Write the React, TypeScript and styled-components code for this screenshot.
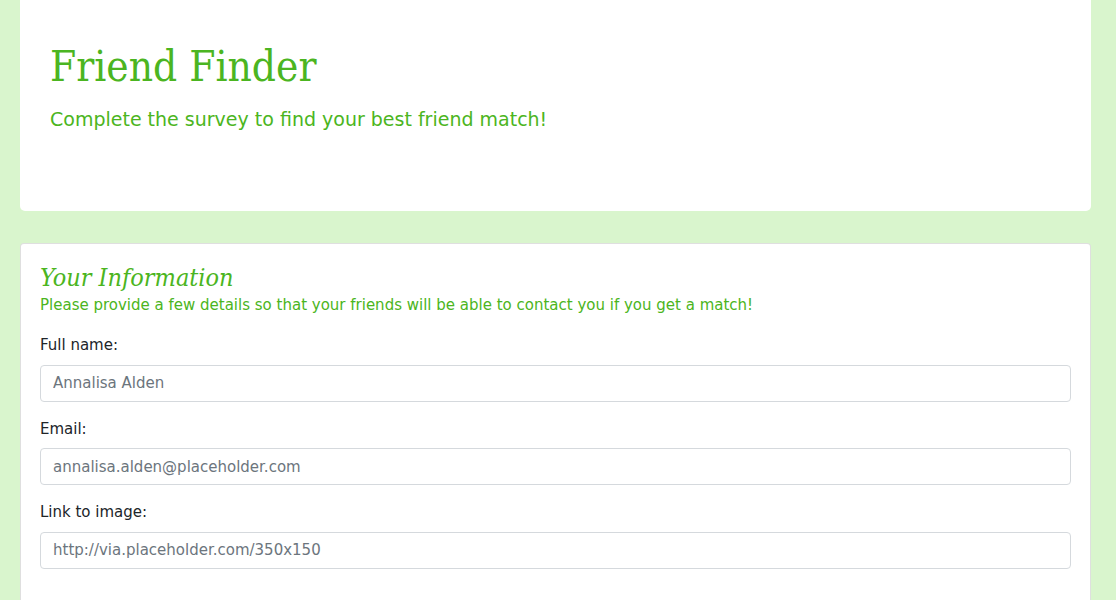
import React from "react";
import styled, { createGlobalStyle } from "styled-components";

const GREEN = "#4bb521";

const Global = createGlobalStyle`
  html, body { margin: 0; padding: 0; }
  body {
    background: #d9f5cd;
    font-family: "DejaVu Sans", "Noto Sans", sans-serif;
    font-size: 15px;
    line-height: 1.5;
    color: #212529;
  }
  * { box-sizing: border-box; }
`;

const Page = styled.div`
  display: flex;
  flex-direction: column;
  gap: 32px;
  padding: 0 25px 0 20px;
`;

const Jumbotron = styled.header`
  background: #fff;
  border-radius: 0 0 5px 5px;
  padding: 42px 30px 61px;
  display: flex;
  flex-direction: column;
  gap: 13px;
`;

const Title = styled.h1`
  margin: 0;
  font-family: "DejaVu Serif Condensed", "DejaVu Serif", "Liberation Serif", serif;
  font-stretch: condensed;
  font-weight: 400;
  font-size: 42px;
  line-height: 1.2;
  color: ${GREEN};
`;

const Lead = styled.p`
  margin: 0 0 16px;
  font-size: 19px;
  font-weight: 400;
  line-height: 1.5;
  color: ${GREEN};
`;

const Card = styled.section`
  background: #fff;
  border: 1px solid rgba(0, 0, 0, 0.125);
  border-radius: 4px;
  padding: 19px 19px 30px;
  display: flex;
  flex-direction: column;
`;

const CardTitle = styled.h3`
  margin: 0 0 1px;
  font-family: "DejaVu Serif Condensed", "DejaVu Serif", "Liberation Serif", serif;
  font-stretch: condensed;
  font-style: italic;
  font-weight: 400;
  font-size: 25px;
  line-height: 1.2;
  color: ${GREEN};
`;

const CardText = styled.p`
  margin: 0 0 18px;
  color: ${GREEN};
`;

const FormGroup = styled.div`
  display: flex;
  flex-direction: column;
  gap: 8px;
  margin-bottom: 16px;
`;

const Label = styled.label`
  color: #212529;
`;

const Input = styled.input`
  display: block;
  width: 100%;
  height: 37px;
  padding: 6px 12px;
  font: inherit;
  color: #495057;
  background: #fff;
  border: 1px solid #d5d9dd;
  border-radius: 4px;
  outline: none;
  &::placeholder { color: #6c757d; opacity: 1; }
`;

const fields = [
  { id: "name", label: "Full name:", placeholder: "Annalisa Alden" },
  { id: "email", label: "Email:", placeholder: "annalisa.alden@placeholder.com" },
  { id: "photo", label: "Link to image:", placeholder: "http://via.placeholder.com/350x150" },
];

export default function App() {
  return (
    <>
      <Global />
      <Page>
        <Jumbotron>
          <Title>Friend Finder</Title>
          <Lead>Complete the survey to find your best friend match!</Lead>
        </Jumbotron>
        <Card>
          <CardTitle>Your Information</CardTitle>
          <CardText>
            Please provide a few details so that your friends will be able to contact you if you get a match!
          </CardText>
          {fields.map((f) => (
            <FormGroup key={f.id}>
              <Label htmlFor={f.id}>{f.label}</Label>
              <Input id={f.id} type="text" placeholder={f.placeholder} />
            </FormGroup>
          ))}
        </Card>
      </Page>
    </>
  );
}
